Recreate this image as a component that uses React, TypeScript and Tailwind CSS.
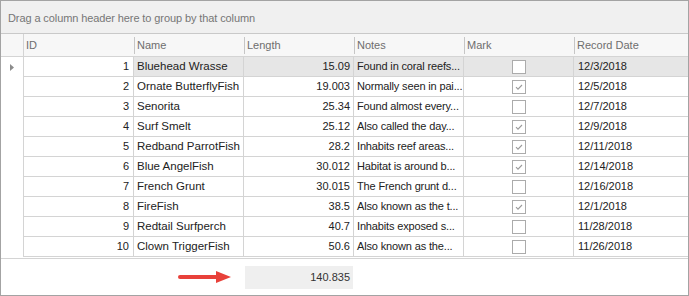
import React from "react"

// rows shown in the grid
const fish = [
  { id: 1, name: "Bluehead Wrasse", length: "15.09", notes: "Found in coral reefs...", mark: false, date: "12/3/2018" },
  { id: 2, name: "Ornate ButterflyFish", length: "19.003", notes: "Normally seen in pai...", mark: true, date: "12/5/2018" },
  { id: 3, name: "Senorita", length: "25.34", notes: "Found almost every...", mark: false, date: "12/7/2018" },
  { id: 4, name: "Surf Smelt", length: "25.12", notes: "Also called the day...", mark: true, date: "12/9/2018" },
  { id: 5, name: "Redband ParrotFish", length: "28.2", notes: "Inhabits reef areas...", mark: true, date: "12/11/2018" },
  { id: 6, name: "Blue AngelFish", length: "30.012", notes: "Habitat is around b...", mark: true, date: "12/14/2018" },
  { id: 7, name: "French Grunt", length: "30.015", notes: "The French grunt d...", mark: false, date: "12/16/2018" },
  { id: 8, name: "FireFish", length: "38.5", notes: "Also known as the t...", mark: true, date: "12/1/2018" },
  { id: 9, name: "Redtail Surfperch", length: "40.7", notes: "Inhabits exposed s...", mark: false, date: "11/28/2018" },
  { id: 10, name: "Clown TriggerFish", length: "50.6", notes: "Also known as the...", mark: false, date: "11/26/2018" },
]

const columns = ["ID", "Name", "Length", "Notes", "Mark", "Record Date"]

function CheckBox({ checked }: { checked: boolean }) {
  return (
    <div className="w-[14px] h-[14px] border border-[#ababab] bg-white flex items-center justify-center">
      {checked && (
        <svg width="10" height="10" viewBox="0 0 10 10">
          <path d="M2 5.2 L4 7.2 L8 3" fill="none" stroke="#9a9a9a" strokeWidth="1.1" />
        </svg>
      )}
    </div>
  )
}

export default function App() {
  return (
    <div
      className="w-[689px] h-[296px] border border-[#a3a3a3] bg-white flex flex-col text-[11px] text-[#222]"
      style={{ fontFamily: '"Liberation Sans", Arial, sans-serif' }}
    >
      {/* Group panel */}
      <div className="h-[33px] shrink-0 bg-[#f0f0f0] border-b border-[#c9c9c9] flex items-center pl-[7px] pt-[2px] text-[11px] tracking-[-0.1px] text-[#767676]">
        Drag a column header here to group by that column
      </div>

      {/* Column headers */}
      <div className="h-[23px] shrink-0 flex bg-[#f7f7f7] border-b border-[#d4d4d4] text-[#6e6e6e] text-[11px]">
        <div className="w-[23px] border-r border-[#d4d4d4]" />
        {columns.map((col, i) => (
          <div
            key={col}
            className={
              i === columns.length - 1
                ? "flex-1 flex items-center"
                : "w-[110px] flex items-center"
            }
          >
            {i > 0 && <div className="w-px h-[17px] bg-[#c6c6c6] mr-[2px]" />}
            <span className={i === 0 ? "pl-[2px]" : ""}>{col}</span>
          </div>
        ))}
      </div>

      {/* Rows */}
      <div className="shrink-0">
        {fish.map((f, r) => {
          const sel = r === 0
          const cellBg = sel ? "bg-[#e6e6e6]" : "bg-white"
          return (
            <div key={f.id} className="flex h-[20px]">
              <div className="w-[23px] border-r border-[#d4d4d4] bg-white flex items-center pl-[9px]">
                {sel && (
                  <svg width="4" height="7" viewBox="0 0 4 7">
                    <path d="M0 0 L4 3.5 L0 7 Z" fill="#8c8c8c" />
                  </svg>
                )}
              </div>
              <div className="w-[110px] border-r border-b border-[#d4d4d4] bg-white flex items-center justify-end pr-[4px]">
                {f.id}
              </div>
              <div className={`w-[110px] border-r border-b border-[#d4d4d4] ${cellBg} flex items-center pl-[3px] text-[11.5px] whitespace-nowrap`}>
                {f.name}
              </div>
              <div className={`w-[110px] border-r border-b border-[#d4d4d4] ${cellBg} flex items-center justify-end pr-[3px]`}>
                {f.length}
              </div>
              <div className={`w-[110px] border-r border-b border-[#d4d4d4] ${cellBg} flex items-center pl-[3px] tracking-[-0.15px] whitespace-nowrap`}>
                {f.notes}
              </div>
              <div className={`w-[110px] border-r border-b border-[#d4d4d4] ${cellBg} flex items-center justify-center`}>
                <CheckBox checked={f.mark} />
              </div>
              <div className={`flex-1 border-b border-[#d4d4d4] ${cellBg} flex items-center pl-[4px]`}>
                {f.date}
              </div>
            </div>
          )
        })}
      </div>

      {/* Footer with summary */}
      <div className="mt-px flex-1 border-t border-[#d4d4d4] flex items-center">
        <div className="w-[244px] flex justify-end pr-[13px]">
          <svg width="54" height="14" viewBox="0 0 54 14">
            <path d="M2 7 L40 7" stroke="#e8413a" strokeWidth="4" strokeLinecap="round" />
            <path d="M38 1 L53 7 L38 13 Z" fill="#e8413a" />
          </svg>
        </div>
        <div className="w-[108px] h-[23px] bg-[#efefef] flex items-center justify-end pr-[3px] text-[#333]">
          140.835
        </div>
      </div>
    </div>
  )
}
